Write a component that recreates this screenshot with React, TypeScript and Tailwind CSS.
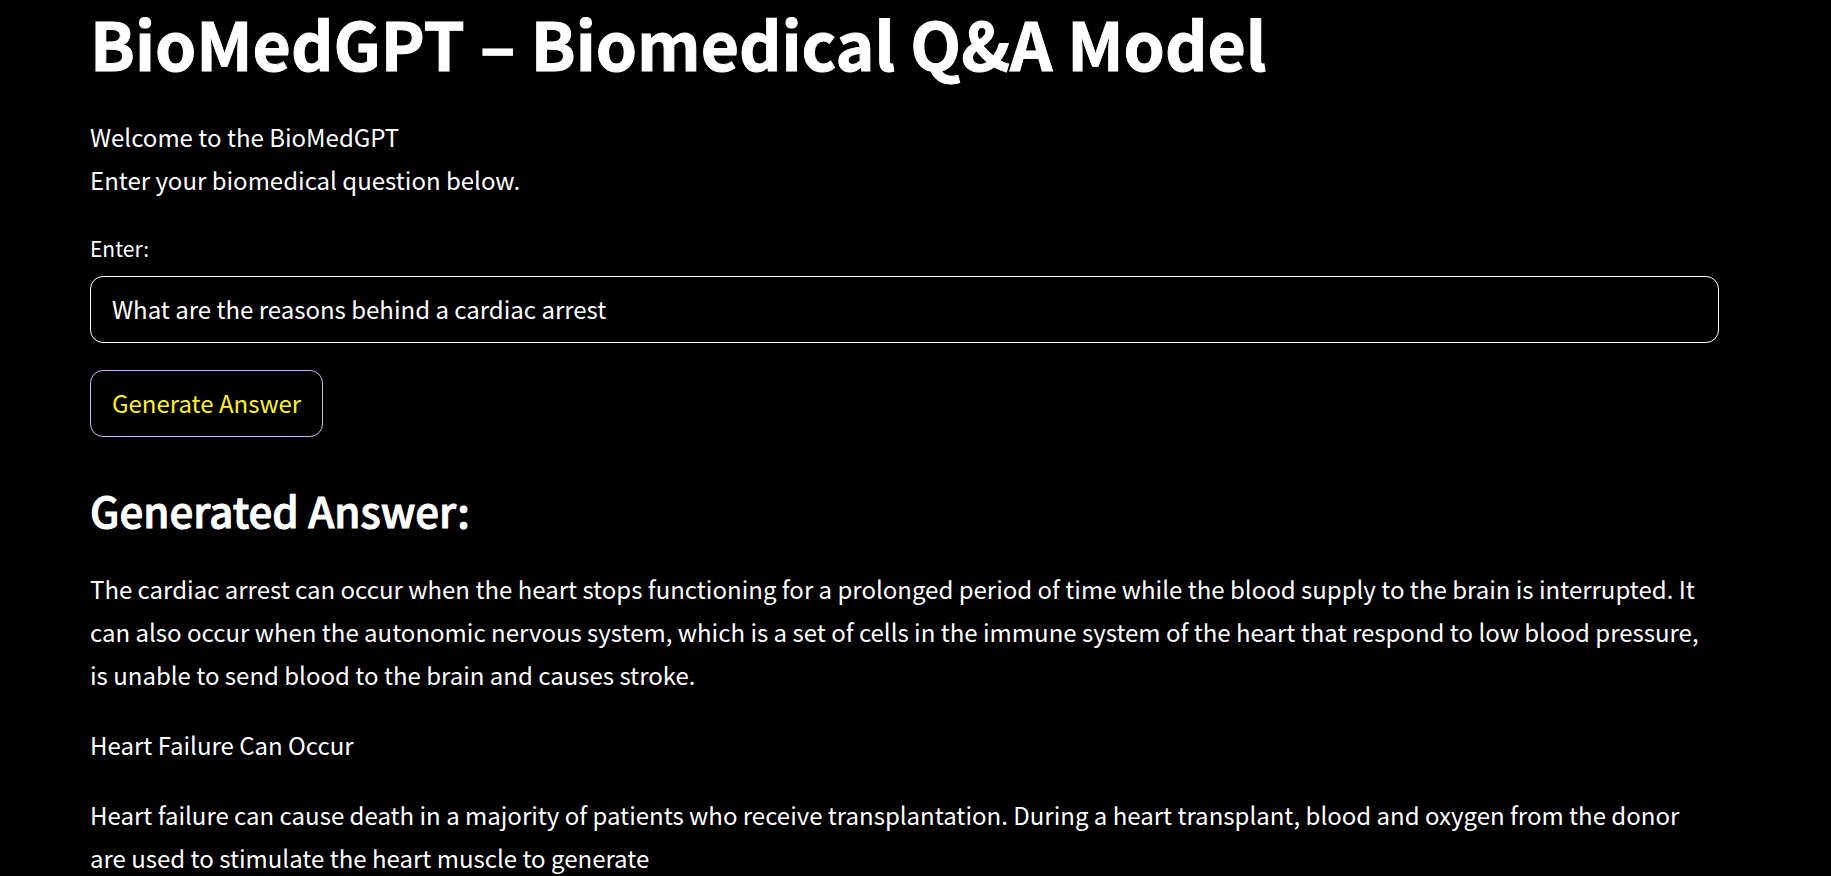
import { useState } from "react";

export default function App() {
  const [question, setQuestion] = useState("What are the reasons behind a cardiac arrest");

  return (
    <main className="min-h-screen bg-black pr-28 pl-[90px] font-['Noto_Sans_CJK_SC',sans-serif] text-[24px] leading-[43px] text-white">
      <h1 className="text-[66px] leading-[84px] font-bold [-webkit-text-stroke:1px_white]">
        BioMedGPT – Biomedical Q&amp;A Model
      </h1>
      <p className="mt-[31px]">
        Welcome to the BioMedGPT
        <br />
        Enter your biomedical question below.
      </p>
      <form onSubmit={(e) => e.preventDefault()}>
        <label htmlFor="question" className="mt-[31px] block text-[21px] leading-8">
          Enter:
        </label>
        <input
          id="question"
          type="text"
          value={question}
          onChange={(e) => setQuestion(e.target.value)}
          className="mt-3 block h-[67px] w-full rounded-[13px] border border-white bg-black px-[21px] pb-0.5 outline-none"
        />
        <button
          type="submit"
          className="mt-[27px] block h-[67px] rounded-[13px] border border-[#d0b4ff] px-[21px] pb-0.5 text-[#fff01f]"
        >
          Generate Answer
        </button>
      </form>
      <h2 className="mt-[45px] text-[42px] leading-[56px] font-medium [-webkit-text-stroke:1px_white]">
        Generated Answer:
      </h2>
      <div className="mt-[29px] flex flex-col gap-[27px]">
        <p>
          The cardiac arrest can occur when the heart stops functioning for a prolonged period of time while the blood
          supply to the brain is interrupted. It can also occur when the autonomic nervous system, which is a set of
          cells in the immune system of the heart that respond to low blood pressure, is unable to send blood to the
          brain and causes stroke.
        </p>
        <p>Heart Failure Can Occur</p>
        <p>
          Heart failure can cause death in a majority of patients who receive transplantation. During a heart
          transplant, blood and oxygen from the donor are used to stimulate the heart muscle to generate
        </p>
      </div>
    </main>
  );
}
